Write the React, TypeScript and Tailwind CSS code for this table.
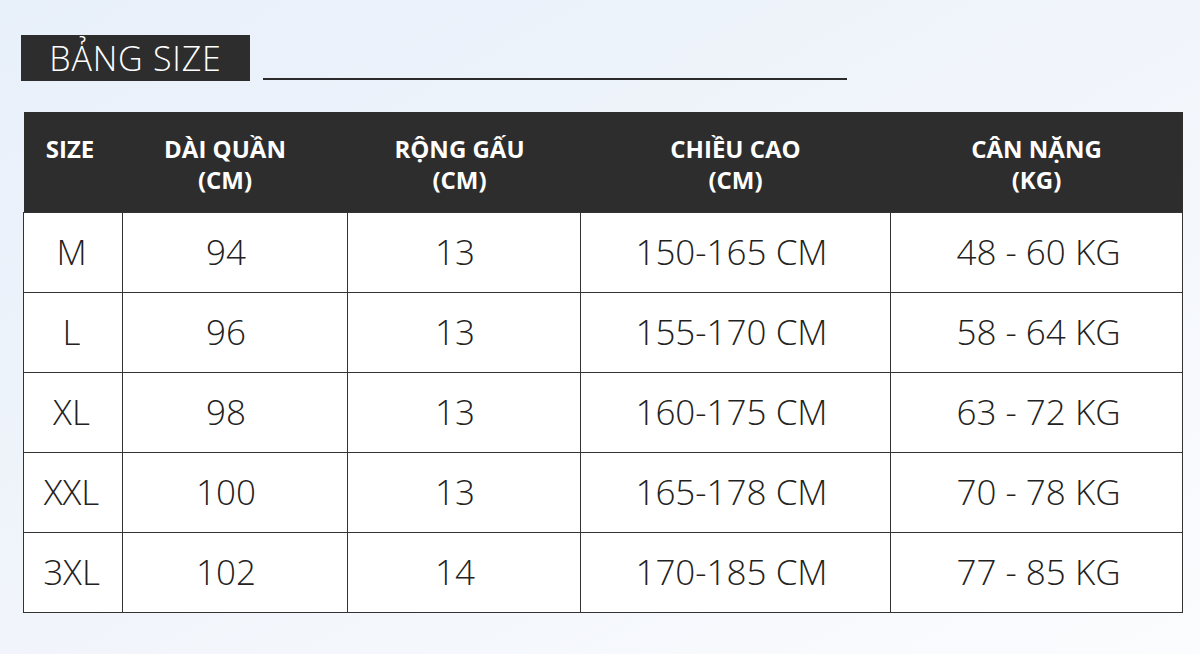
const rows = [
  ["M", "94", "13", "150-165 CM", "48 - 60 KG"],
  ["L", "96", "13", "155-170 CM", "58 - 64 KG"],
  ["XL", "98", "13", "160-175 CM", "63 - 72 KG"],
  ["XXL", "100", "13", "165-178 CM", "70 - 78 KG"],
  ["3XL", "102", "14", "170-185 CM", "77 - 85 KG"],
];

const heads = [
  ["SIZE", " "],
  ["DÀI QUẦN", "(CM)"],
  ["RỘNG GẤU", "(CM)"],
  ["CHIỀU CAO", "(CM)"],
  ["CÂN NẶNG", "(KG)"],
];

// columns: width, header nudge, body nudge (text sits a little left of centre in the source)
const cols = [
  { w: "w-[99px]", th: "pr-[6px]", td: "pr-[3px]" },
  { w: "w-[225px]", th: "pr-[20px]", td: "pr-[18px]" },
  { w: "w-[233px]", th: "pr-[9px]", td: "pr-[18px]" },
  { w: "w-[310px]", th: "", td: "pr-[8px]" },
  { w: "w-[292px]", th: "", td: "pl-[4px]" },
];

export default function App() {
  return (
    <div className="w-[1200px] h-[654px] overflow-hidden bg-gradient-to-br from-[#e8f0fa] via-[#f1f5fb] to-[#fbfcfe] font-['Open_Sans',sans-serif]">
      <div className="pt-[35px] pl-[21px] flex items-end gap-[13px]">
        <div className="h-[46px] w-[229px] bg-[#2d2d2d] flex items-center justify-center text-white text-[34px] font-light tracking-[0.8px]">
          BẢNG SIZE
        </div>
        <div className="w-[584px] h-[2px] bg-[#2b2b2b] mb-[1px]" />
      </div>
      <table className="mt-[31px] ml-[23px] border-collapse text-center">
        <thead>
          <tr className="bg-[#2d2d2d] h-[100px]">
            {heads.map((h, i) => (
              <th key={i} className={`${cols[i].w} ${cols[i].th} text-white text-[24px] font-bold leading-[31px] p-0 pt-[5px]`}>
                {h.map((l, j) => (
                  <div key={j} className="whitespace-pre">{l}</div>
                ))}
              </th>
            ))}
          </tr>
        </thead>
        <tbody className="bg-white">
          {rows.map((r) => (
            <tr key={r[0]} className="h-[80px]">
              {r.map((c, i) => (
                <td key={i} className={`border border-[#333] text-[35px] font-light text-[#222] p-0 ${cols[i].td}`}>
                  {c}
                </td>
              ))}
            </tr>
          ))}
        </tbody>
      </table>
    </div>
  );
}
